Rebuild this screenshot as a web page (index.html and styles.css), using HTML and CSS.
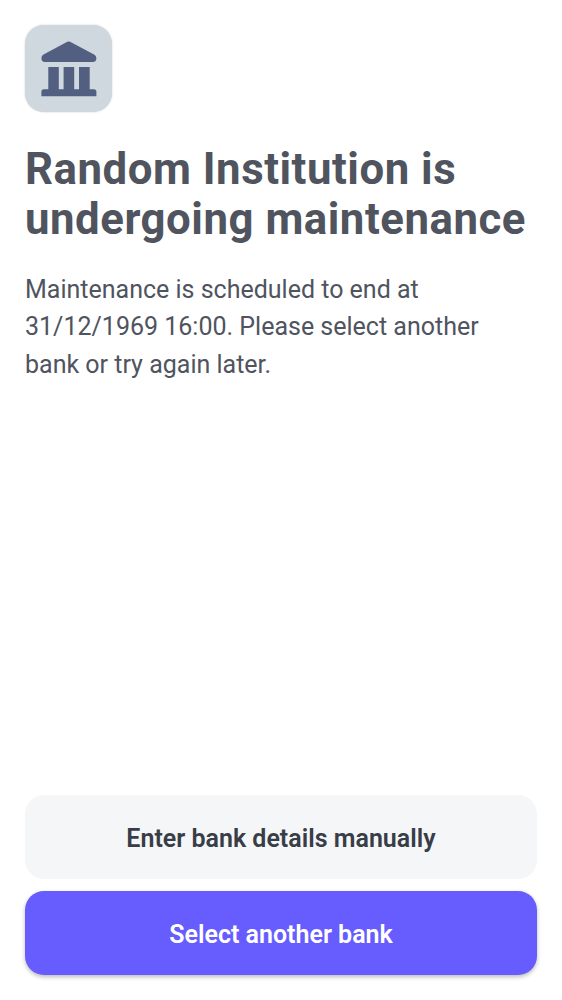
FILE: index.html
```html
<!DOCTYPE html>
<html lang="en">
<head>
<meta charset="utf-8">
<title>Institution maintenance</title>
<link rel="stylesheet" href="styles.css">
</head>
<body>
<main class="screen">
  <div class="bank-icon">
    <svg class="bank-glyph" viewBox="0.5 0.5 56 56" aria-hidden="true">
      <path d="M26.800 1.300Q28.200 .5 29.600 1.300L54 14.200Q55.900 15.200 55.900 17.700Q55.900 21.400 52.200 21.400H4.400Q.9 21.400 .9 17.700Q.9 15.200 2.600 14.200ZM7.800 26.500H18.300V48.700H23.100V26.500H33.700V48.700H38.500V26.500H49.200V48.700H53.400Q55.900 48.700 55.900 51.200V55.700H.9V51.200Q.9 48.700 3.400 48.700H7.800Z"/>
    </svg>
  </div>
  <h1 class="title">Random Institution is<br>undergoing maintenance</h1>
  <p class="message">Maintenance is scheduled to end at<br>31/12/1969 16:00. Please select another<br>bank or try again later.</p>
  <div class="actions">
    <button class="button secondary">Enter bank details manually</button>
    <button class="button primary">Select another bank</button>
  </div>
</main>
</body>
</html>
```
FILE: styles.css
```css
* { box-sizing: border-box; }
body { margin: 0; background: #fff; font-family: Roboto, sans-serif; }
.screen { display: flex; flex-direction: column; height: 1000px; padding: 25px; }
.bank-icon { display: flex; align-items: center; justify-content: center; width: 87px; height: 87px; border-radius: 19px; background: #cfd7df; box-shadow: 0 0 2px #0003; }
.bank-glyph { width: 56px; height: 56px; fill: #525f80; }
.title { margin: 32px 0 0; color: #4f545e; font-size: 43.75px; line-height: 50px; font-weight: 700; letter-spacing: .53px; white-space: nowrap; }
.message { margin: 26.5px 0 0; color: #4f545e; font-size: 25px; line-height: 37.5px; white-space: nowrap; }
.actions { display: flex; flex-direction: column; gap: 12px; margin-top: auto; }
.button { height: 84px; padding: 2px 0 0; border: 0; border-radius: 19px; font: 600 25px Roboto, sans-serif; }
.secondary { background: #f4f6f8; color: #383d47; }
.primary { background: #675dff; color: #fff; box-shadow: 0 2px 4px #0004; }
```
